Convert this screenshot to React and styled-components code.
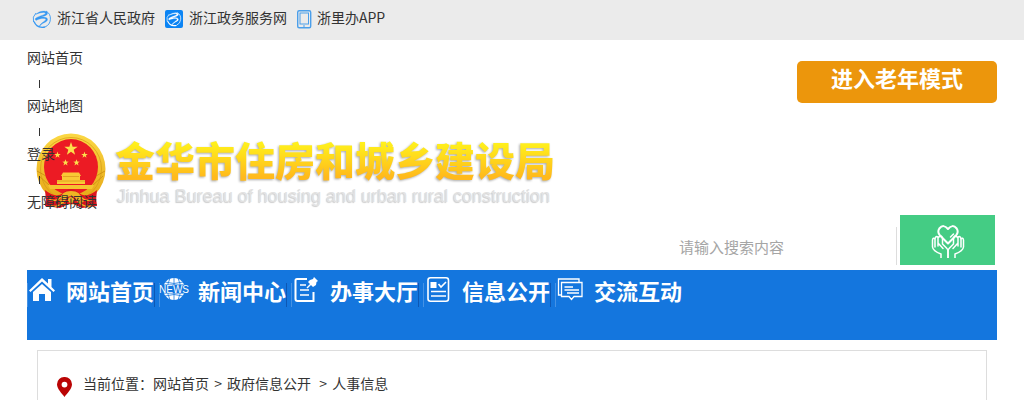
import React from "react";
import styled, { createGlobalStyle } from "styled-components";

const GlobalStyle = createGlobalStyle`
  * { box-sizing: border-box; }
  body {
    margin: 0;
    background: #fff;
    color: #333;
    font-family: "Noto Sans CJK SC", "Liberation Sans", sans-serif;
    font-size: 14px;
    line-height: 24px;
  }
  a { color: inherit; text-decoration: none; }
  svg { display: block; flex: none; }
`;

const TopBar = styled.div`
  display: flex;
  align-items: flex-start;
  height: 40px;
  padding: 5px 32px 0;
  gap: 9px;
  background: #ebebeb;
`;

const TopLink = styled.a`
  display: flex;
  gap: 5px;
  svg { margin-top: 4px; }
`;

const Container = styled.div`
  margin: 0 27px;
`;

const Header = styled.header`
  display: grid;
  grid-template-columns: 1fr auto;
  min-height: 230px;
  padding-top: 5px;
`;

const Brand = styled.a`
  grid-area: 1 / 1;
  align-self: start;
  display: flex;
  gap: 9px;
  padding: 88px 0 0 9px;
`;

const BrandText = styled.span`
  display: flex;
  flex-direction: column;
  white-space: nowrap;
`;

const BrandName = styled.span`
  font-size: 40px;
  line-height: 52px;
  font-weight: 900;
  background: linear-gradient(#fff01c 20%, #ffb91c 85%);
  background-clip: text;
  -webkit-background-clip: text;
  color: transparent;
  filter: drop-shadow(-1px 1px 1px #aaa);
`;

const BrandSub = styled.span`
  padding-left: 2px;
  font-family: "Liberation Sans", Arial, sans-serif;
  font-size: 18px;
  line-height: 22px;
  color: #e2e2e2;
  text-shadow: -1px 1px 1px #ccc;
`;

const QuickLinks = styled.ul`
  grid-area: 1 / 1;
  justify-self: start;
  z-index: 1;
  margin: 0;
  padding: 0;
  list-style: none;
`;

const QuickItem = styled.li`
  & + &::before {
    content: "";
    display: block;
    width: 1px;
    height: 8px;
    margin: 11px 12px 5px;
    background: #333;
  }
`;

const Tools = styled.div`
  grid-area: 1 / 2;
  display: flex;
  flex-direction: column;
  align-items: flex-end;
  justify-content: space-between;
  padding: 16px 0 5px;
`;

const ElderButton = styled.button`
  width: 200px;
  height: 42px;
  padding: 0 0 10px;
  border: 0;
  border-radius: 5px;
  background: #ec960c;
  color: #fff;
  font: bold 22px/32px "Noto Sans CJK SC", sans-serif;
`;

const Search = styled.form`
  display: flex;
  align-items: flex-end;
  padding-right: 2px;
`;

const SearchInput = styled.input`
  width: 230px;
  height: 38px;
  margin-right: 3px;
  padding: 0 12px;
  border: 0;
  border-right: 1px solid #ddd;
  background: transparent;
  font: 15px/24px "Noto Sans CJK SC", sans-serif;
  outline: none;
  &::placeholder { color: #a5a5a5; opacity: 1; }
`;

const SearchButton = styled.button`
  display: flex;
  align-items: center;
  justify-content: center;
  width: 95px;
  height: 50px;
  padding: 2px 0 0;
  border: 0;
  background: #44cc84;
`;

const Nav = styled.nav`
  display: flex;
  gap: 4px;
  height: 70px;
  background: #1476de;
  color: #fff;
`;

const NavLink = styled.a`
  display: flex;
  gap: 9px;
  width: 128px;
  height: 42px;
  white-space: nowrap;
  font-size: 22px;
  font-weight: bold;
  line-height: 40px;
  background:
    linear-gradient(#4592e5, #4592e5) left 13px / 1px 24px no-repeat,
    ${(p) => (p.$last ? "none" : "linear-gradient(#0d57b4, #0d57b4)")} right 13px / 1px 24px no-repeat;
  svg { width: 30px; height: 40px; }
`;

const Panel = styled.main`
  margin: 10px 10px 0;
  padding: 20px 19px 4px;
  border: 1px solid #ddd;
  border-bottom: 0;
`;

const Crumbs = styled.div`
  display: flex;
  white-space: pre;
  svg { margin: 6px 11px 0 0; }
`;

const Divider = styled.span`
  padding: 0 2px;
`;

function Swirl({ boxed }) {
  const c = boxed ? "#fff" : "#3798f2";
  return (
    <svg width="20" height="20" viewBox="0 0 20 20" fill="none">
      {boxed && <rect x="1" y="1" width="18" height="18" rx="2" fill="#0b84f4" />}
      <g transform={boxed ? "translate(2 2) scale(.8)" : undefined}>
        <path d="M1.500 13A9 9 0 0 1 4 4M14 2A9 9 0 0 1 13 18" stroke={c} strokeWidth=".9" />
        <path d="M3.5 5.5C8 1.5 15 1 15.5 4.2C15.8 7 9 7.6 5 9.4C10 7 16.7 8.2 15.4 11.2C14.5 13.5 9 14 7 18.4C7.7 14 13.400 12.400 13.800 10.500C14 9 9 8.800 4 11.400L3 10C5 7.200 13.500 6 13.400 4.200C13 2.700 8 3.500 3.500 5.500Z" fill={c} stroke={c} strokeWidth=".3" />
        <path d="M2 12.500C4 17.500 8 19 13 18" stroke={c} strokeWidth="1.300" />
      </g>
    </svg>
  );
}

function PhoneIcon() {
  return (
    <svg width="16" height="20" viewBox="0 0 16 20" fill="none" stroke="#4b9fea">
      <rect x="1.7" y="1.7" width="13" height="17" rx="1.5" strokeWidth="1.4" />
      <rect x="4" y="4" width="8.5" height="11" strokeWidth="1" />
      <path d="M7 17h2" strokeWidth="1.2" />
    </svg>
  );
}

const star = (cx, cy, r) =>
  Array.from({ length: 10 }, (_, i) => {
    const a = (i * Math.PI) / 5 - Math.PI / 2;
    const q = i % 2 ? r * 0.4 : r;
    return `${cx + q * Math.cos(a)},${cy + q * Math.sin(a)}`;
  }).join(" ");

function Emblem() {
  return (
    <svg width="70" height="76" viewBox="0 0 70 76">
      <defs>
        <linearGradient id="gold" x1="0" y1="0" x2="0" y2="1">
          <stop offset="0" stopColor="#fbd844" />
          <stop offset="1" stopColor="#e5a414" />
        </linearGradient>
      </defs>
      <path d="M11 58L9 73L24 75L35 70L46 75L61 73L59 57Z" fill="#d7131d" />
      <ellipse cx="35" cy="36" rx="34.5" ry="35.5" fill="url(#gold)" />
      <ellipse cx="35" cy="36" rx="30.5" ry="31.5" fill="none" stroke="#d69b16" strokeWidth=".7" />
      <path d="M3 43L13 52M1 38L10 43M67 43L57 52M69 38L60 43" stroke="#c98c12" strokeWidth=".8" />
      <ellipse cx="35" cy="34" rx="27" ry="28" fill="#ec1b24" />
      <polygon points={star(35, 16, 7)} fill="#fce04c" />
      {[[21.5, 22], [48.5, 22], [29.500, 29.700], [40.500, 29.700]].map(([x, y]) => (
        <polygon key={x} points={star(x, y, 3.4)} fill="#fce04c" />
      ))}
      <path d="M27 39.500H43L45 43H44V47H49V51H21V47H26V43H25Z" fill="#f9ca35" />
      <path d="M27 43.500H43M21 48H49" stroke="#dd9a20" strokeWidth=".8" />
      <path d="M12 52H58L56 56H14Z" fill="#f5c431" />
      <path d="M9 57Q20 66 27 60Q31 56 35 56Q39 56 43 60Q50 66 61 57L60 68Q52 74 45 66L41 71H29L25 66Q18 74 10 68Z" fill="#dd151f" />
      <path d="M25 66Q25 58 35 58Q45 58 45 66L41 69Q40 63 35 63Q30 63 29 69Z" fill="#efb524" />
      <circle cx="35" cy="67" r="3" fill="#efb524" />
      <path d="M13 66Q20 70 26 63M57 66Q50 70 44 63M14 73Q22 75 28 68M56 73Q48 75 42 68" fill="none" stroke="#efb524" strokeWidth="1.3" />
    </svg>
  );
}

function CareIcon() {
  const hand = (
    <path d="M10 34V30Q2 27 1.500 23V16Q2 13 4 15V23M4 16Q4 11.500 7 13V22M7 14Q10 10 11.500 14V20L15.500 24Q17 25.500 17 27V34M7 19L12 24.500" />
  );
  return (
    <svg width="34" height="34" viewBox="0 0 34 34" fill="none" stroke="#fff" strokeWidth="1.5" strokeLinecap="round" strokeLinejoin="round">
      <path d="M17 19.500L9 11.500Q6 8 8.300 4.500Q12.500 -.500 17 5Q21.500 -.500 25.700 4.500Q28 8 25 11.500Z" strokeWidth="2" />
      <path d="M19.500 13L22.500 10" />
      {hand}
      <g transform="translate(34 0) scale(-1 1)">{hand}</g>
    </svg>
  );
}

const HomeIcon = () => (
  <svg viewBox="0 0 30 40">
    <path d="M15 8L2 20.5L3.5 22L15 11.5L26.5 22L28 20.5L24.5 17V9H21V13.5Z" fill="#fff" />
    <path d="M6 22L15 14L24 22V31H18V24H12V31H6Z" fill="#fff" />
  </svg>
);

const NewsLabel = styled.text`
  font: 400 10px "Liberation Sans", Arial, sans-serif;
`;

const NewsIcon = () => (
  <svg viewBox="0 0 30 40">
    <circle cx="15" cy="19" r="11" fill="#fff" />
    <path d="M6 12Q15 15 24 12M6 26Q15 23 24 26M15 8V31M11 8Q6 19 11 30M19 8Q24 19 19 30" fill="none" stroke="#1476de" strokeWidth=".8" />
    <path d="M0 14.5H30V23.500H0Z" fill="#1476de" />
    <NewsLabel x="15" y="23" fill="#fff" textAnchor="middle">NEWS</NewsLabel>
  </svg>
);

const EditIcon = () => (
  <svg viewBox="0 0 30 40" fill="none" stroke="#fff" strokeWidth="2">
    <path d="M16 9H6Q4.500 9 4.500 10.500V29Q4.500 31 6.500 31H22.500V22" />
    <path d="M9 15H15M9 20H18M9 25H18" strokeWidth="1.700" />
    <path d="M23 7L27 11L25.500 12L25 15L22 17L17 12L19 10L22 9Z" fill="#fff" stroke="none" />
    <path d="M20 14L16 18" strokeWidth="1.500" />
  </svg>
);

const ListIcon = () => (
  <svg viewBox="0 0 30 40" fill="none" stroke="#fff" strokeWidth="1.600">
    <rect x="5" y="7.700" width="20.500" height="23.500" rx="2.500" />
    <rect x="7.500" y="12" width="6" height="6" fill="#fff" stroke="none" />
    <path d="M15.500 14L18 17L23 12M8 21.500H23M8 26H23" />
  </svg>
);

const ChatIcon = () => (
  <svg viewBox="0 0 30 40" fill="none" stroke="#fff" strokeWidth="1.300">
    <path d="M6 25H3.500V9H24V12M6.500 12.500H27V26.500H19L16.500 29.500L14 26.500H6.500Z" />
    <path d="M9.500 17H18M9.500 20H24M12 23H24" />
  </svg>
);

const navItems = [
  ["网站首页", HomeIcon],
  ["新闻中心", NewsIcon],
  ["办事大厅", EditIcon],
  ["信息公开", ListIcon],
  ["交流互动", ChatIcon],
];

export default function App() {
  return (
    <>
      <GlobalStyle />
      <TopBar>
        <TopLink href="#"><Swirl />浙江省人民政府</TopLink>
        <TopLink href="#"><Swirl boxed />浙江政务服务网</TopLink>
        <TopLink href="#"><PhoneIcon />浙里办APP</TopLink>
      </TopBar>
      <Container>
        <Header>
          <Brand href="#">
            <Emblem />
            <BrandText>
              <BrandName>金华市住房和城乡建设局</BrandName>
              <BrandSub>Jinhua Bureau of housing and urban rural construction</BrandSub>
            </BrandText>
          </Brand>
          <QuickLinks>
            {["网站首页", "网站地图", "登录", "无障碍阅读"].map((t) => (
              <QuickItem key={t}><a href="#">{t}</a></QuickItem>
            ))}
          </QuickLinks>
          <Tools>
            <ElderButton type="button">进入老年模式</ElderButton>
            <Search onSubmit={(e) => e.preventDefault()}>
              <SearchInput type="text" placeholder="请输入搜索内容" aria-label="请输入搜索内容" />
              <SearchButton type="submit" aria-label="搜索"><CareIcon /></SearchButton>
            </Search>
          </Tools>
        </Header>
        <Nav>
          {navItems.map(([label, Icon], i) => (
            <NavLink key={label} href="#" $last={i === navItems.length - 1}>
              <Icon />{label}
            </NavLink>
          ))}
        </Nav>
        <Panel>
          <Crumbs>
            <svg width="15" height="20" viewBox="0 0 15 20">
              <path d="M7.500 0A7.300 7.300 0 0 0 0 7.300C0 12 5 16.500 7.500 20C10 16.500 15 12 15 7.300A7.300 7.300 0 0 0 7.500 0ZM7.500 4.700A2.900 2.900 0 1 1 7.500 10.500A2.900 2.900 0 0 1 7.500 4.700Z" fill="#ba0404" fillRule="evenodd" />
            </svg>
            <span>当前位置：</span><a href="#">网站首页</a>
            <Divider> &gt; </Divider><a href="#">政府信息公开</a>
            <Divider>{"  > "}</Divider><a href="#">人事信息</a>
          </Crumbs>
        </Panel>
      </Container>
    </>
  );
}
